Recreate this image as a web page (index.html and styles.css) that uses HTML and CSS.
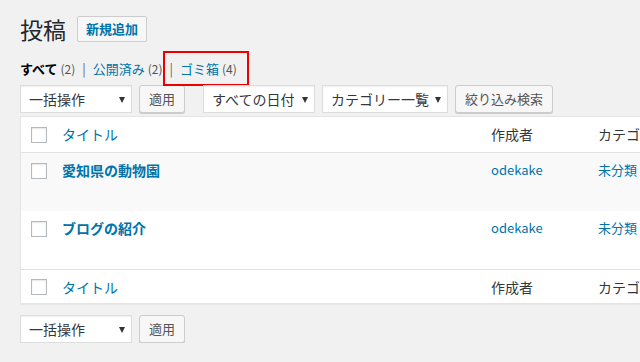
FILE: index.html
```html
<!DOCTYPE html>
<html lang="ja">
<head>
  <meta charset="UTF-8" />
  <title>投稿一覧</title>
  <link rel="stylesheet" href="styles.css">
</head>
<body>
  <div class="wrap">
    <div class="page-head">
      <h1>投稿</h1>
      <a class="add-new">新規追加</a>
    </div>

    <ul class="subsubsub">
      <li class="current">すべて <span class="count">(2)</span></li>
      <li class="sep">|</li>
      <li><a>公開済み</a> <span class="count">(2)</span></li>
      <li class="sep">|</li>
      <li><a>ゴミ箱</a> <span class="count">(4)</span></li>
    </ul>
    <span class="highlight"></span>

    <div class="tablenav">
      <div class="select w-bulk">一括操作</div>
      <button class="btn">適用</button>
      <div class="select w-date gap">すべての日付</div>
      <div class="select w-cat">カテゴリー一覧</div>
      <button class="btn">絞り込み検索</button>
    </div>

    <table class="posts">
      <thead>
        <tr>
          <td class="cb"><span class="check"></span></td>
          <th class="col-title"><a>タイトル</a></th>
          <th class="col-author">作成者</th>
          <th class="col-cat">カテゴリー</th>
        </tr>
      </thead>
      <tbody>
        <tr class="alt">
          <td class="cb"><span class="check"></span></td>
          <td class="col-title"><a class="row-title">愛知県の動物園</a></td>
          <td class="col-author"><a>odekake</a></td>
          <td class="col-cat"><a>未分類</a></td>
        </tr>
        <tr>
          <td class="cb"><span class="check"></span></td>
          <td class="col-title"><a class="row-title">ブログの紹介</a></td>
          <td class="col-author"><a>odekake</a></td>
          <td class="col-cat"><a>未分類</a></td>
        </tr>
      </tbody>
      <tfoot>
        <tr>
          <td class="cb"><span class="check"></span></td>
          <th class="col-title"><a>タイトル</a></th>
          <th class="col-author">作成者</th>
          <th class="col-cat">カテゴリー</th>
        </tr>
      </tfoot>
    </table>

    <div class="tablenav bottom">
      <div class="select w-bulk">一括操作</div>
      <button class="btn">適用</button>
    </div>
  </div>
</body>
</html>
```

FILE: styles.css
```css
html, body {
  margin: 0;
  padding: 0;
  background: #f1f1f1;
  overflow: hidden;
}
body {
  font-family: "Noto Sans CJK JP", "Noto Sans", sans-serif;
  font-size: 13px;
  color: #444;
}
a { color: #0073aa; text-decoration: none; }

.wrap {
  position: relative;
  padding: 16px 0 0 20px;
  width: 800px;
}

.page-head {
  display: flex;
  align-items: center;
  height: 26px;
}
.page-head h1 {
  margin: 0 11px 0 0;
  font-size: 23px;
  font-weight: 400;
  line-height: 26px;
  color: #23282d;
}
.add-new {
  display: inline-block;
  box-sizing: border-box;
  height: 26px;
  line-height: 24px;
  padding: 0 8px;
  border: 1px solid #ccc;
  border-radius: 2px;
  background: #f7f7f7;
  font-weight: 700;
  font-size: 13px;
}

.subsubsub {
  list-style: none;
  margin: 14px 0 0;
  padding: 0;
  display: flex;
  height: 26px;
  line-height: 26px;
  font-size: 13px;
}
.subsubsub li { white-space: pre; }
.subsubsub .current { font-weight: 700; color: #000; }
.subsubsub .count { font-weight: 400; color: #555; font-size: 12px; }
.subsubsub .sep { color: #666; padding: 0 7px; }

.highlight {
  position: absolute;
  left: 163px;
  top: 51px;
  width: 82px;
  height: 31px;
  border: 2px solid #e00;
}

.tablenav {
  display: flex;
  align-items: center;
  height: 29px;
  margin-top: 2px;
}
.tablenav.bottom { margin-top: 10px; }

.select {
  position: relative;
  box-sizing: border-box;
  height: 28px;
  line-height: 26px;
  padding: 0 0 0 8px;
  margin-right: 7px;
  background: #fff;
  border: 1px solid #ddd;
  box-shadow: inset 0 1px 2px rgba(0,0,0,.07);
  color: #32373c;
  font-size: 14px;
}
.select::after {
  content: "";
  position: absolute;
  right: 6px;
  top: 11px;
  border-left: 3.5px solid transparent;
  border-right: 3.5px solid transparent;
  border-top: 6px solid #333;
}
.w-bulk { width: 112px; }
.w-date { width: 112px; }
.w-cat { width: 126px; }
.gap { margin-left: 10px; }

.btn {
  box-sizing: border-box;
  height: 28px;
  padding: 0 9px;
  margin: 0 8px 0 0;
  font-family: inherit;
  font-size: 13px;
  color: #555;
  background: #f7f7f7;
  border: 1px solid #ccc;
  border-radius: 3px;
  box-shadow: 0 1px 0 #ccc;
  line-height: 26px;
}

.posts {
  margin-top: 3px;
  width: 760px;
  border-collapse: collapse;
  background: #fff;
  border: 1px solid #e5e5e5;
  border-right: 0;
  box-shadow: 0 1px 1px rgba(0,0,0,.04);
  table-layout: fixed;
}
.posts td, .posts th {
  text-align: left;
  vertical-align: top;
  font-weight: 400;
  padding: 0 10px;
}
.posts .cb { width: 21px; padding-left: 10px; padding-right: 0; }
.posts .col-title { width: 409px; }
.posts .col-author { width: 87px; }

.check {
  display: block;
  box-sizing: border-box;
  width: 16px;
  height: 16px;
  border: 1px solid #b4b9be;
  background: #fff;
  box-shadow: inset 0 1px 2px rgba(0,0,0,.1);
}

.posts thead tr { height: 36px; border-bottom: 1px solid #e1e1e1; }
.posts tfoot tr { height: 34px; border-top: 1px solid #e1e1e1; }
.posts thead th { padding-top: 9px; }
.posts thead .cb { padding-top: 10px; }
.posts tfoot th { padding-top: 9px; }
.posts tfoot .cb { padding-top: 9px; }
.posts th { font-size: 14px; line-height: 16px; color: #32373c; }
.posts th a { font-size: 14px; }

.posts tbody tr { height: 58px; }
.posts tbody tr + tr { height: 59px; }
.posts tbody tr.alt { background: #f9f9f9; }
.posts tbody td { padding-top: 9px; line-height: 16px; font-size: 13px; }
.posts tbody .cb { padding-top: 10px; }
.row-title { font-weight: 700; font-size: 14px; }
```
